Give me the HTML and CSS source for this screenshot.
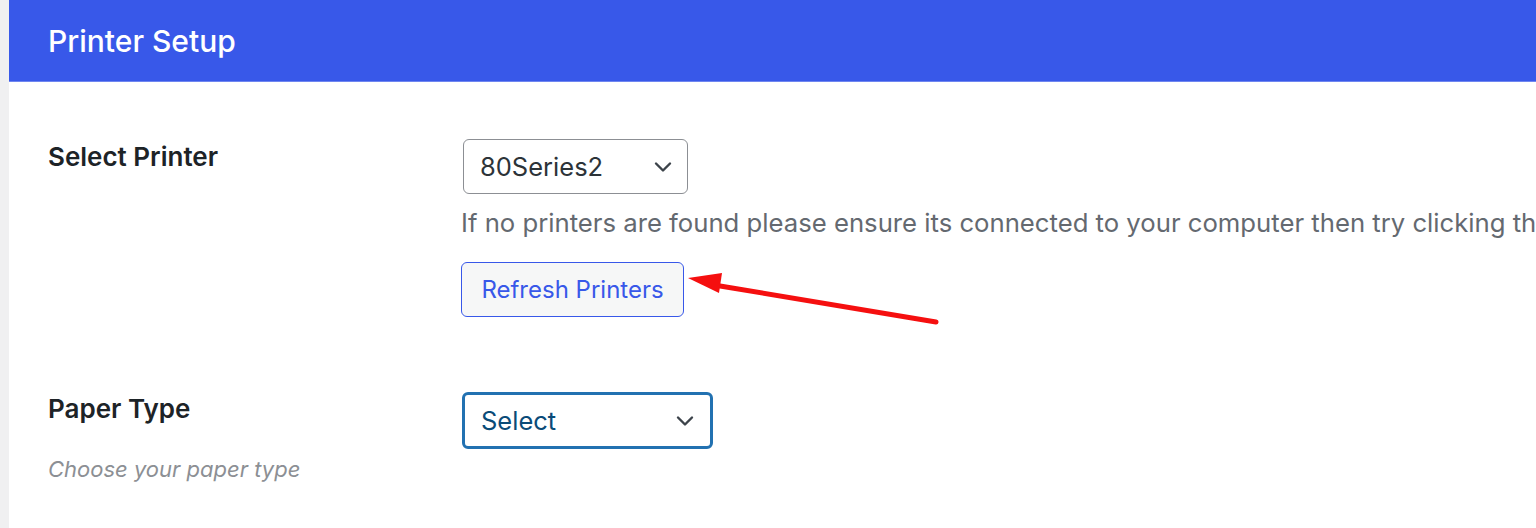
FILE: index.html
```html
<!DOCTYPE html>
<html lang="en">
<head>
<meta charset="utf-8">
<title>Printer Setup</title>
<link rel="stylesheet" href="styles.css">
</head>
<body>
<div class="page">
  <div class="sidebar-edge"></div>
  <main class="panel">
    <header class="panel-header">
      <h1 class="panel-title">Printer Setup</h1>
    </header>
    <div class="form">
      <div class="row row-printer">
        <div class="label-col">
          <div class="label">Select Printer</div>
        </div>
        <div class="field-col">
          <div class="select select-printer">
            <span class="select-value">80Series2</span>
            <svg class="chevron" width="20" height="12" viewBox="0 0 20 12"><path d="M3 2.5 L10 9.5 L17 2.5" fill="none" stroke="#3c434a" stroke-width="2.4" stroke-linecap="round" stroke-linejoin="round"/></svg>
          </div>
          <p class="help">If no printers are found please ensure its connected to your computer then try clicking the Refresh Printers button below.</p>
          <button class="btn-refresh" type="button">Refresh Printers</button>
        </div>
      </div>
      <div class="row row-paper">
        <div class="label-col">
          <div class="label">Paper Type</div>
          <div class="desc">Choose your paper type</div>
        </div>
        <div class="field-col">
          <div class="select select-paper">
            <span class="select-value">Select</span>
            <svg class="chevron" width="20" height="12" viewBox="0 0 20 12"><path d="M3 2.5 L10 9.5 L17 2.5" fill="none" stroke="#3c434a" stroke-width="2.4" stroke-linecap="round" stroke-linejoin="round"/></svg>
          </div>
        </div>
      </div>
    </div>
    <svg class="annotation-arrow" width="260" height="60" viewBox="0 0 260 60">
      <line x1="248" y1="52" x2="26" y2="15" stroke="#f50f0f" stroke-width="5" stroke-linecap="round"/>
      <polygon points="0,8 34,3 31,23" fill="#f50f0f"/>
    </svg>
  </main>
</div>
</body>
</html>
```
FILE: styles.css
```css
html, body {
  margin: 0;
  padding: 0;
  background: #ffffff;
  overflow: hidden;
}
body {
  font-family: Inter, "Noto Sans", "Liberation Sans", sans-serif;
  color: #1d2327;
}
.page {
  display: flex;
  min-height: 528px;
}
.sidebar-edge {
  width: 9px;
  flex: none;
  background: #f0f0f1;
}
.panel {
  position: relative;
  flex: 1;
  background: #ffffff;
  min-width: 0;
  overflow: hidden;
}
.panel-header {
  height: 81px;
  background: #3858e9;
  border-bottom: 1px solid #6f86f0;
  display: flex;
  align-items: center;
  padding-left: 39px;
}
.panel-title {
  margin: 0;
  color: #ffffff;
  font-size: 30px;
  font-weight: 500;
  letter-spacing: 0;
}
.form {
  padding-left: 39px;
}
.row {
  display: grid;
  grid-template-columns: 413px 1fr;
}
.row-printer {
  padding-top: 57px;
}
.row-paper {
  padding-top: 75px;
}
.label {
  font-size: 26px;
  font-weight: 600;
  color: #1d2327;
  line-height: 32px;
}
.row-printer .label {
  margin-top: 2px;
}
.row-paper .label {
  margin-top: 1px;
}
.desc {
  margin-top: 31px;
  font-size: 22px;
  font-style: italic;
  color: #8c8f94;
  line-height: 26px;
}
.field-col {
  min-width: 0;
}
.select {
  box-sizing: border-box;
  display: flex;
  align-items: center;
  justify-content: space-between;
  border-radius: 6px;
  background: #ffffff;
}
.select-value {
  font-size: 25.5px;
  line-height: 30px;
}
.select-printer {
  margin-left: 2px;
  width: 225px;
  height: 55px;
  border: 1.5px solid #8c8f94;
  padding: 0 14px 0 16px;
  color: #2c3338;
}
.select-paper {
  margin-left: 1px;
  width: 251px;
  height: 57px;
  border: 3px solid #2271b1;
  padding: 0 15px 0 16px;
  color: #0a4b78;
}
.chevron {
  display: block;
  flex: none;
}
.help {
  margin: 14px 0 0 0;
  font-size: 25.7px;
  line-height: 30px;
  color: #646970;
  white-space: nowrap;
}
.btn-refresh {
  margin-top: 24px;
  box-sizing: border-box;
  width: 223px;
  height: 55px;
  border: 1.5px solid #3858e9;
  border-radius: 6px;
  background: #f6f7f7;
  color: #3858e9;
  font-family: inherit;
  font-size: 24px;
  padding: 0;
}
.annotation-arrow {
  position: absolute;
  left: 679px;
  top: 270px;
}
```
